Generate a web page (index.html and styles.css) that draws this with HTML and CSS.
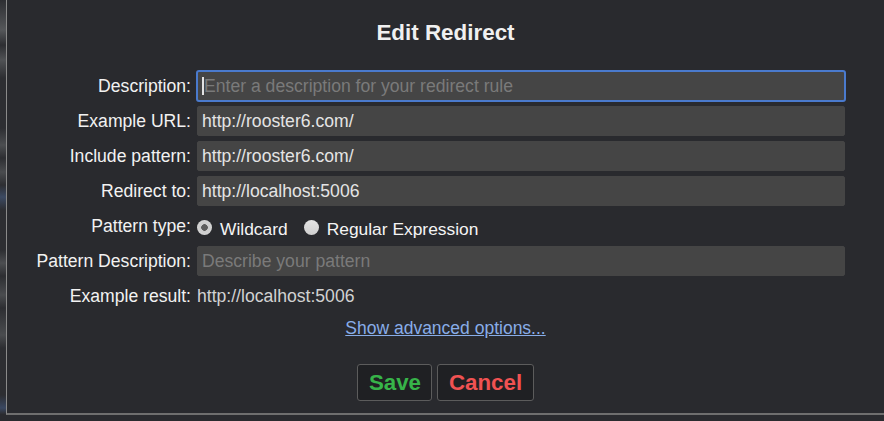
FILE: index.html
```html
<!DOCTYPE html>
<html lang="en">
<head>
<meta charset="utf-8">
<title>Edit Redirect</title>
<link rel="stylesheet" href="styles.css">
</head>
<body>
<div class="page">
  <div class="backdrop"></div>
  <div class="dialog">
    <h1 class="title">Edit Redirect</h1>
    <div class="form">
      <label class="label">Description:</label>
      <div class="field">
        <input class="input focused" type="text" placeholder="Enter a description for your redirect rule">
        <span class="caret"></span>
      </div>

      <label class="label">Example URL:</label>
      <input class="input" type="text" value="http://rooster6.com/">

      <label class="label">Include pattern:</label>
      <input class="input" type="text" value="http://rooster6.com/">

      <label class="label">Redirect to:</label>
      <input class="input" type="text" value="http://localhost:5006">

      <span class="label">Pattern type:</span>
      <div class="radios">
        <span class="option"><span class="radio checked"></span><span class="option-text">Wildcard</span></span>
        <span class="option"><span class="radio"></span><span class="option-text">Regular Expression</span></span>
      </div>

      <label class="label">Pattern Description:</label>
      <input class="input" type="text" placeholder="Describe your pattern">

      <span class="label">Example result:</span>
      <span class="value">http://localhost:5006</span>
    </div>
    <div class="advanced"><a class="link" href="#">Show advanced options...</a></div>
    <div class="actions">
      <button class="btn save" type="button">Save</button>
      <button class="btn cancel" type="button">Cancel</button>
    </div>
  </div>
</div>
</body>
</html>
```

FILE: styles.css
```css
html, body {
  margin: 0;
  padding: 0;
  overflow: hidden;
}

body {
  background: #2a2b2f;
  font-family: "Liberation Sans", Arial, sans-serif;
}

.page {
  display: flex;
  align-items: flex-start;
  width: 884px;
  height: 421px;
  overflow: hidden;
  background: #2a2b2f;
}

.backdrop {
  flex: 0 0 6px;
  height: 414px;
  background: linear-gradient(
    to bottom,
    #2d2e32 0px, #55575a 30px, #2d2e32 45px,
    #505255 60px, #2d2e32 78px,
    #2d2e32 128px, #4c4e51 145px, #2d2e32 158px,
    #4a4c4f 172px, #2d2e32 185px,
    #3c4a63 197px, #2d2e32 210px,
    #2d2e32 250px, #4c4e51 263px, #2d2e32 276px,
    #4a4c4f 295px, #2d2e32 308px,
    #4a4c4f 335px, #2d2e32 348px,
    #2d2e32 395px, #3a4862 408px, #2d2e32 414px
  );
}

.dialog {
  flex: 0 0 879px;
  box-sizing: border-box;
  height: 415px;
  background: #292a2e;
  border-left: 1px solid #8a8a8a;
  border-right: 1px solid #8a8a8a;
  border-bottom: 2px solid #6f6f6f;
  padding-top: 20px;
}

.title {
  margin: 0;
  text-align: center;
  font-size: 22.4px;
  line-height: 25px;
  font-weight: bold;
  color: #f0f0f0;
}

.form {
  display: grid;
  grid-template-columns: 155px 648px;
  grid-auto-rows: 30px;
  column-gap: 6px;
  row-gap: 5px;
  margin: 26px 0 0 29px;
  font-size: 17.6px;
}

.label {
  align-self: center;
  justify-self: end;
  text-align: right;
  line-height: 20px;
  color: #f2f2f2;
  white-space: nowrap;
}

.field {
  position: relative;
  height: 30px;
}

.input {
  display: block;
  box-sizing: border-box;
  width: 648px;
  height: 30px;
  margin: 0;
  padding: 0 4px;
  background: #454545;
  border: 1px solid #454545;
  border-radius: 2px;
  color: #e4e4e4;
  font-family: "Liberation Sans", Arial, sans-serif;
  font-size: 17.6px;
  outline: none;
}

.input::placeholder {
  color: #7a7a7a;
  opacity: 1;
}

.input.focused {
  padding-left: 6px;
  outline: 2px solid #4a7acd;
  outline-offset: -1px;
}

.caret {
  position: absolute;
  left: 5px;
  top: 6px;
  width: 2px;
  height: 18px;
  background: #e2e2e2;
}

.radios {
  display: flex;
  align-items: center;
  gap: 16px;
  padding-top: 2px;
  color: #f4f4f4;
  font-size: 17.4px;
}

.option {
  display: flex;
  align-items: center;
  gap: 8px;
}

.radio {
  display: block;
  box-sizing: border-box;
  width: 15px;
  height: 15px;
  border-radius: 50%;
  background: linear-gradient(#e4e4e4, #cfcfcf);
}

.radio.checked {
  background: radial-gradient(circle, #5d5d5d 0, #5d5d5d 3px, #cccccc 3.6px, #d4d4d4 7.5px);
}

.option-text {
  padding-top: 4px;
  line-height: 20px;
}

.value {
  align-self: center;
  line-height: 20px;
  color: #d2d2d2;
}

.advanced {
  margin-top: 7px;
  text-align: center;
  font-size: 17.5px;
  line-height: 20px;
}

.link {
  color: #88ade8;
  text-decoration: underline;
}

.actions {
  display: flex;
  justify-content: center;
  gap: 5px;
  margin-top: 26px;
}

.btn {
  margin: 0;
  padding: 5px 10.5px;
  border: 1px solid #5c5c5c;
  border-radius: 3px;
  background: #1f2023;
  font-family: "Liberation Sans", Arial, sans-serif;
  font-size: 22.3px;
  line-height: 25px;
  font-weight: bold;
}

.save {
  color: #37b449;
}

.cancel {
  color: #f05252;
}
```
